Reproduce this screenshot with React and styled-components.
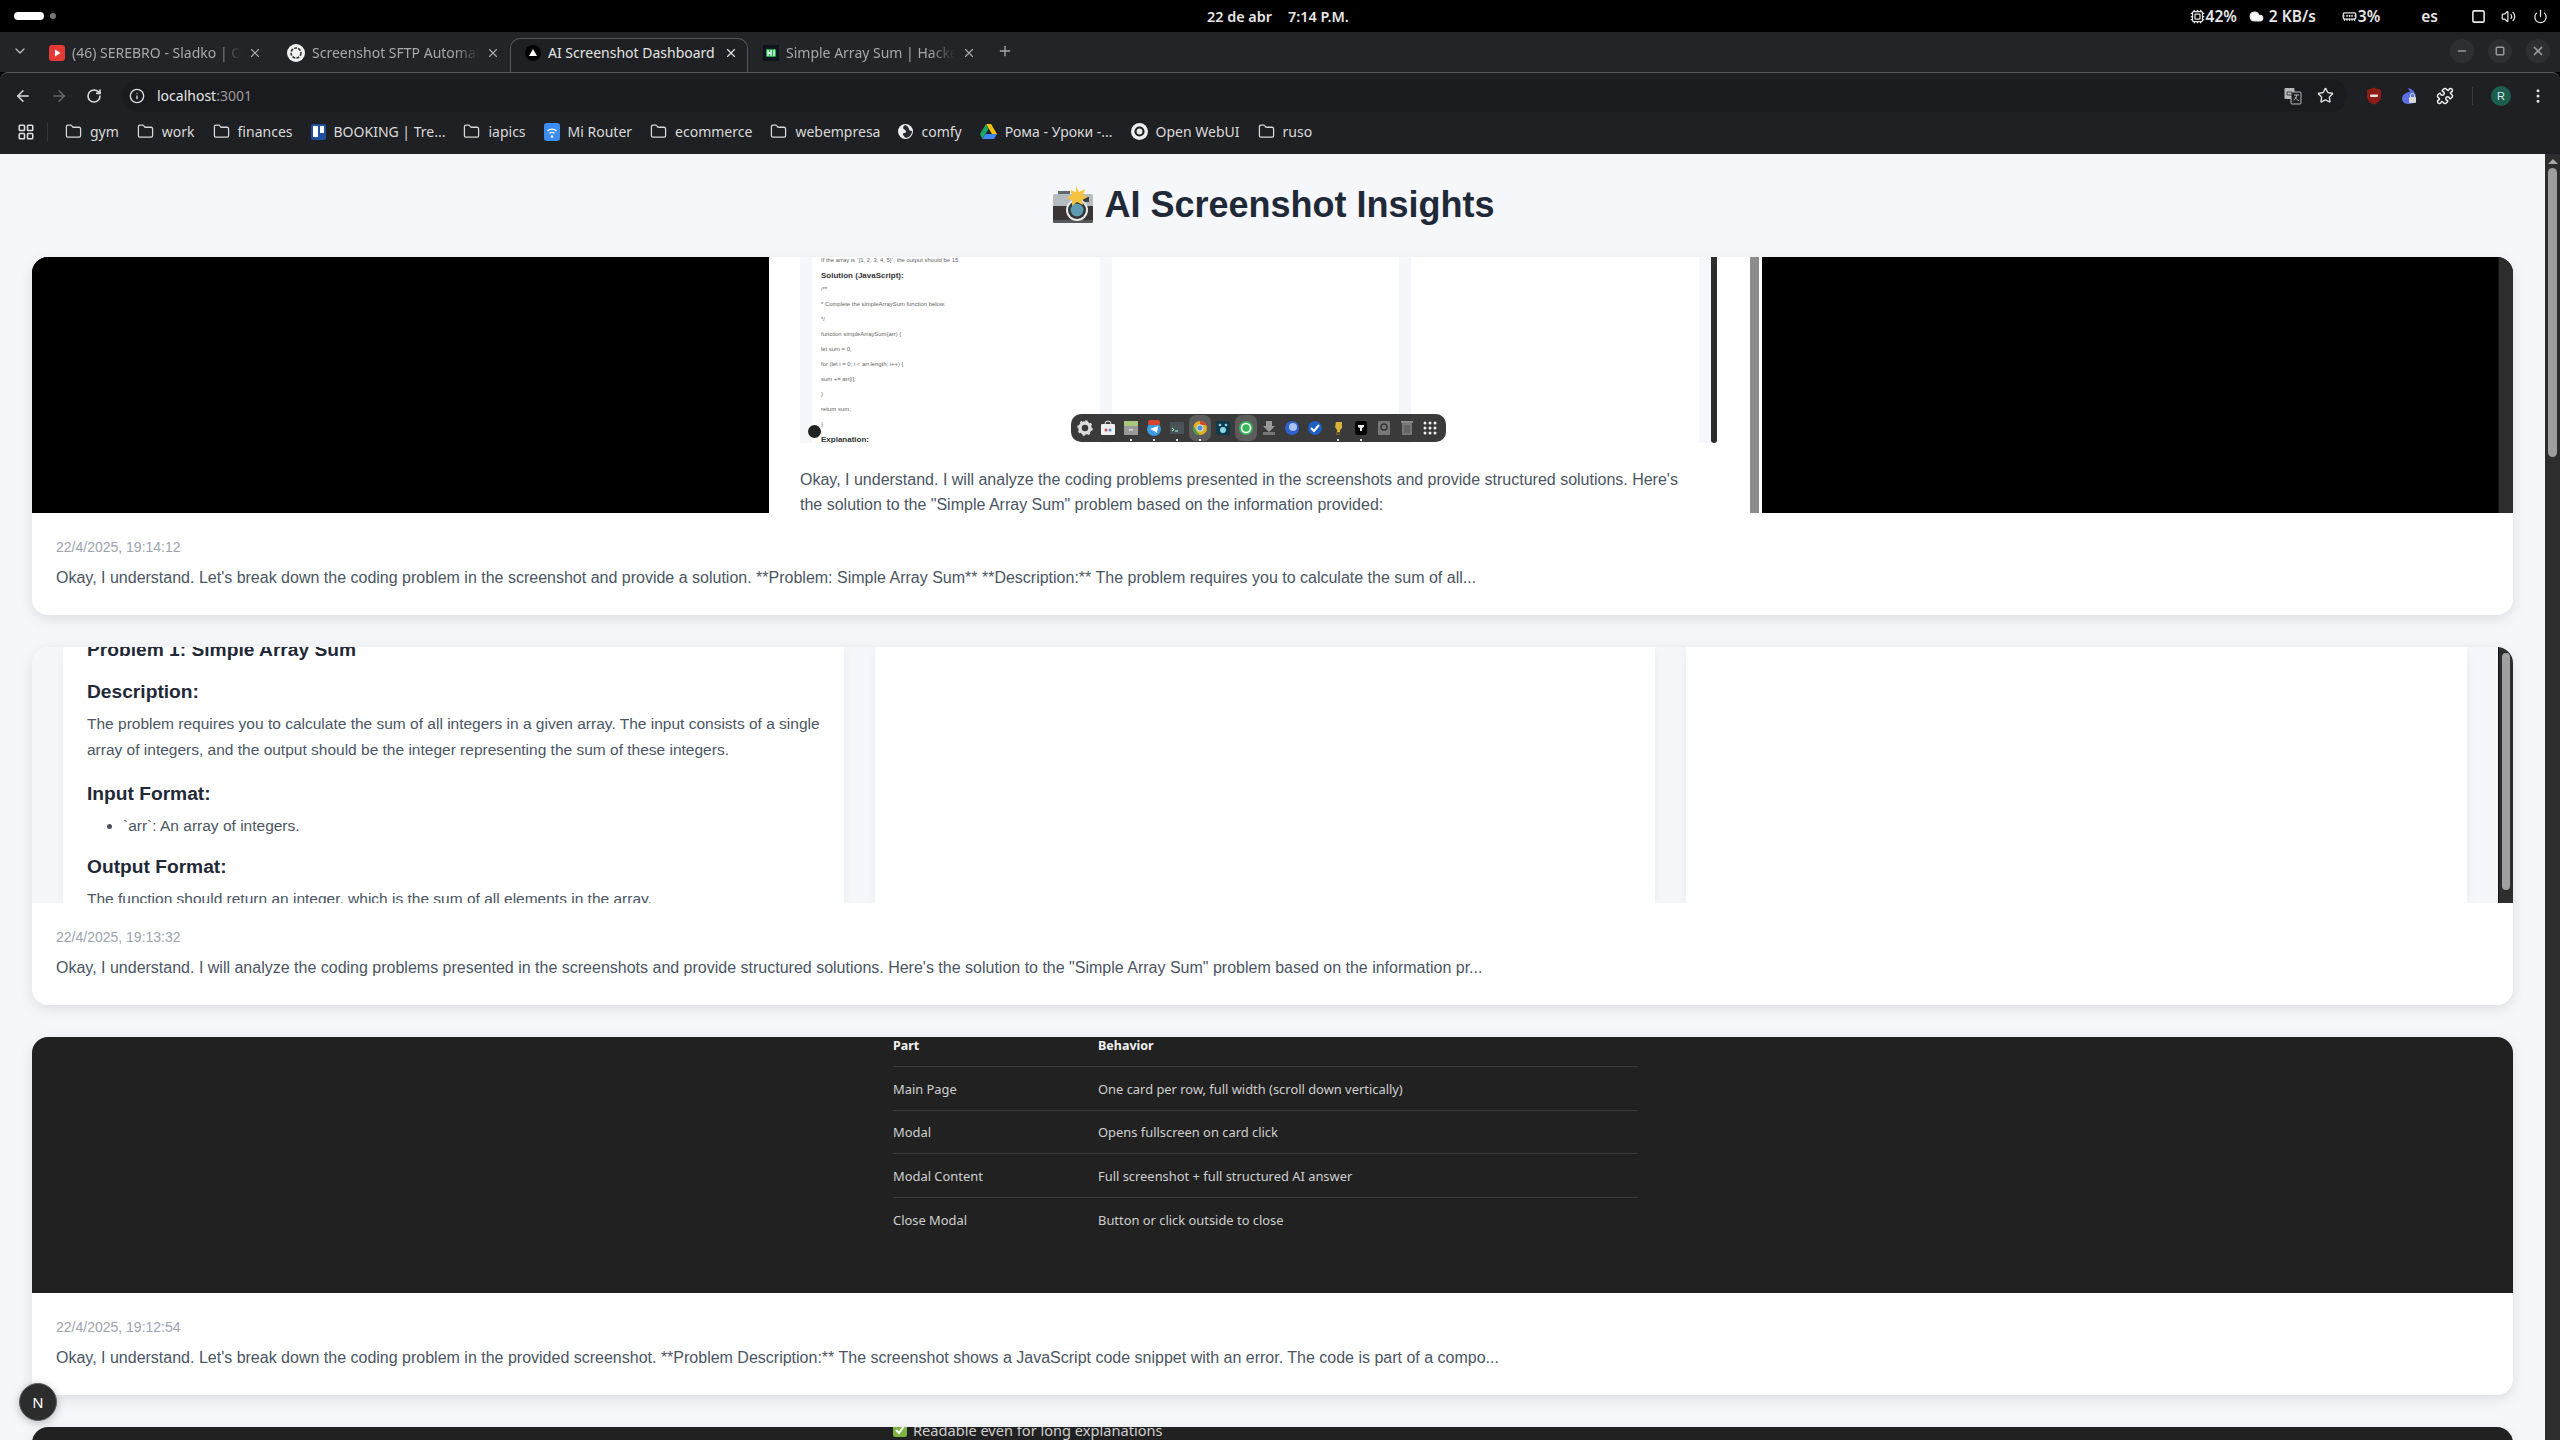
import React from 'react';
import styled, { createGlobalStyle } from 'styled-components';
import {
  ArrowLeft, ArrowRight, ChevronDown, Cloud, Cpu, EllipsisVertical, Folder, Info, LayoutGrid,
  MemoryStick, Minus, Plus, Power, Puzzle, RotateCw, Square, Star, Volume2, X,
} from 'lucide-react';

const GlobalStyle = createGlobalStyle`
  html, body {
    margin: 0;
    height: 100%;
    overflow: hidden;
    background: #000;
    font-family: "Liberation Sans", Arial, sans-serif;
  }
`;

const Root = styled.div`
  position: relative;
  display: flex;
  flex-direction: column;
  width: 2560px;
  height: 1440px;
  overflow: hidden;
`;

/* desktop top bar */
const SystemBar = styled.div`
  position: relative;
  flex: 0 0 32px;
  display: flex;
  align-items: center;
  justify-content: space-between;
  padding: 0 12px 0 14px;
  background: #000;
  color: #e6e6e6;
  font-family: "Noto Sans", sans-serif;
  font-size: 15.5px;
  font-weight: 600;
`;

const Workspaces = styled.div`
  display: flex;
  align-items: center;
  gap: 6px;
`;

const WorkspacePill = styled.span`
  width: 30px;
  height: 8px;
  border-radius: 4px;
  background: #fff;
`;

const WorkspaceDot = styled.span`
  width: 6px;
  height: 6px;
  border-radius: 50%;
  background: #777;
`;

const Clock = styled.div`
  position: absolute;
  left: 1207px;
  display: flex;
  gap: 16px;
  font-size: 14.4px;
  white-space: nowrap;
`;

const Tray = styled.div`
  display: flex;
  align-items: center;
`;

const TrayItem = styled.span`
  display: flex;
  align-items: center;
  gap: 1px;
  margin-left: ${(p) => p.$gap || 0}px;
`;

/* chrome tabs */
const TabStrip = styled.div`
  flex: 0 0 39px;
  display: flex;
  align-items: flex-start;
  padding: 6px 10px 0 0;
  background: #232428;
  box-sizing: border-box;
`;

const TabChevron = styled.div`
  flex: 0 0 34px;
  display: flex;
  justify-content: center;
  padding: 5px 0 0 6px;
  box-sizing: border-box;
  color: #bbb;
`;

const Tab = styled.div`
  position: relative;
  z-index: 1;
  flex: 0 0 238px;
  min-width: 0;
  height: 34px;
  display: flex;
  align-items: center;
  gap: 7px;
  padding: 0 9px 6px 14px;
  box-sizing: border-box;
  overflow: hidden;
  border: 1px solid ${(p) => (p.$active ? '#56575b' : 'transparent')};
  border-bottom: none;
  border-radius: 10px 10px 0 0;
  background: ${(p) => (p.$active ? '#1f2023' : 'transparent')};
  color: ${(p) => (p.$active ? '#e4e4e4' : '#a8a8a8')};
  font-family: "Noto Sans", sans-serif;
  font-size: 14px;
  & > svg {
    flex: 0 0 auto;
  }
`;

const TabTitle = styled.span`
  flex: 1;
  min-width: 0;
  overflow: hidden;
  white-space: nowrap;
  -webkit-mask-image: ${(p) => (p.$fade ? 'linear-gradient(90deg, #000 85%, transparent)' : 'none')};
`;

const NewTab = styled.div`
  display: flex;
  padding: 5px 0 0 11px;
  color: #a8a8a8;
`;

const WindowButtons = styled.div`
  margin-left: auto;
  display: flex;
  gap: 14px;
  padding-top: 1px;
  padding-right: 0;
`;

const WindowButton = styled.div`
  width: 24px;
  height: 24px;
  border-radius: 50%;
  display: flex;
  align-items: center;
  justify-content: center;
  background: #2e2f33;
  color: #9a9a9a;
`;

/* chrome address bar */
const Toolbar = styled.div`
  flex: 0 0 41px;
  display: flex;
  align-items: center;
  padding: 0 13px 0 14px;
  box-sizing: border-box;
  background: #1f2023;
  border-top: 1px solid #56575b;
  border-radius: 8px 8px 0 0;
  color: #d8d8d8;
`;

const NavButton = styled.div`
  flex: 0 0 36px;
  display: flex;
  padding-top: 5px;
  color: ${(p) => (p.$off ? '#666' : '#dcdcdc')};
`;

const Omnibox = styled.div`
  flex: 1;
  height: 33px;
  margin: 5px 0 0 0;
  display: flex;
  align-items: center;
  gap: 12px;
  padding: 0 13px 0 7px;
  box-sizing: border-box;
  border-radius: 17px;
  background: #1a1b1e;
  font-family: "Noto Sans", sans-serif;
  font-size: 14px;
`;

const Url = styled.span`
  color: #e6e6e6;
`;

const UrlPort = styled.span`
  color: #9a9a9a;
`;

const OmniIcons = styled.div`
  margin-left: auto;
  display: flex;
  align-items: center;
  gap: 15px;
`;

const ExtensionIcons = styled.div`
  flex: 0 0 auto;
  display: flex;
  align-items: center;
  padding-top: 5px;
  margin-left: 19px;
  gap: 18px;
`;

const ToolbarSep = styled.span`
  width: 1px;
  height: 18px;
  background: #3a3b3e;
`;

const Avatar = styled.div`
  width: 20px;
  height: 20px;
  border-radius: 50%;
  background: #1e5e50;
  color: #d7efe7;
  font-size: 11px;
  display: flex;
  align-items: center;
  justify-content: center;
`;

/* bookmarks */
const BookmarkBar = styled.div`
  flex: 0 0 41px;
  display: flex;
  align-items: center;
  padding: 0 0 4px 17px;
  box-sizing: border-box;
  background: #1f2023;
  color: #dadada;
  font-family: "Noto Sans", sans-serif;
  font-size: 14px;
`;

const BookmarkSep = styled.span`
  width: 1px;
  height: 20px;
  margin: 0 17px 0 12px;
  background: #333438;
`;

const Bookmarks = styled.div`
  display: flex;
  align-items: center;
  gap: 18px;
`;

const Bookmark = styled.div`
  display: flex;
  align-items: center;
  gap: 8px;
  white-space: nowrap;
`;

/* page */
const Viewport = styled.div`
  flex: 1;
  min-height: 0;
  display: flex;
`;

const Page = styled.main`
  flex: 1;
  min-width: 0;
  padding: 0 32px;
  background: #f5f7fb;
  overflow: hidden;
`;

const Title = styled.h1`
  margin: 0;
  height: 103px;
  display: flex;
  align-items: center;
  justify-content: center;
  gap: 10px;
  padding: 0 0 1px 3px;
  box-sizing: border-box;
  color: #1f2937;
  font-size: 36px;
  font-weight: 700;
`;

const Cards = styled.div`
  display: flex;
  flex-direction: column;
  gap: 32px;
`;

const Card = styled.article`
  flex: 0 0 auto;
  border-radius: 16px;
  overflow: hidden;
  background: #fff;
  box-shadow: 0 4px 14px rgba(0, 0, 0, 0.1);
`;

const ImageArea = styled.div`
  position: relative;
  display: flex;
  height: 256px;
  overflow: hidden;
  background: ${(p) => p.$bg};
`;

const CardBody = styled.div`
  padding: 24px 24px 24.4px;
`;

const Timestamp = styled.div`
  margin-bottom: 8px;
  color: #9ca3af;
  font-size: 14px;
  line-height: 20px;
`;

const Summary = styled.div`
  color: #4b5563;
  font-size: 16px;
  line-height: 25.6px;
  white-space: nowrap;
`;

/* first card: a shot of the app inside a black frame */
const BlackFill = styled.div`
  flex: ${(p) => (p.$width ? `0 0 ${p.$width}px` : '1')};
  background: #000;
`;

const MiniShot = styled.div`
  flex: 0 0 981px;
  display: flex;
  flex-direction: column;
  background: #fff;
  overflow: hidden;
`;

const MiniTop = styled.div`
  flex: 0 0 186px;
  display: flex;
  padding: 0 33px 0 31px;
  overflow: hidden;
`;

const MiniBand = styled.div`
  flex: 1;
  display: flex;
  gap: 12px;
  padding: 0 12px;
  background: #f5f7fb;
`;

const MiniPanel = styled.div`
  flex: 1;
  padding-left: 9px;
  background: #fff;
  color: #666;
  font-size: 5.9px;
  line-height: 15px;
  overflow: hidden;
`;

const MiniLine = styled.div`
  height: 15px;
  white-space: nowrap;
  &:first-child {
    margin-top: -4.5px;
  }
`;

const MiniHeading = styled.div`
  height: 13px;
  margin-top: 1px;
  color: #333;
  font-size: 8px;
  font-weight: 700;
  line-height: 13px;
  white-space: nowrap;
`;

const MiniScroll = styled.div`
  flex: 0 0 6px;
  background: #2d2d2d;
  border-radius: 0 0 4px 4px;
`;

const MiniAnswer = styled.p`
  margin: 23.5px 0 0 31px;
  width: 900px;
  color: #4b5563;
  font-size: 16px;
  line-height: 25px;
`;

const GreyStrip = styled.div`
  flex: 0 0 9px;
  margin-right: 3px;
  background: #8c8c8c;
  box-shadow: 3px 0 0 #fff;
`;

const DarkStrip = styled.div`
  flex: 0 0 15px;
  padding: 6px 3px 13px;
  box-sizing: border-box;
  background: #2d2d2d;
  display: flex;
  border-left: 1px solid #111;
`;

const DarkThumb = styled.div`
  flex: 1;
  border-radius: 5px;
  background: #a0a0a0;
`;

const Dock = styled.div`
  position: absolute;
  left: 1039px;
  top: 157px;
  width: 375px;
  height: 28px;
  display: flex;
  align-items: center;
  gap: 7px;
  padding: 0 6px;
  box-sizing: border-box;
  border-radius: 10px;
  background: #3a3a3a;
`;

const DockSlot = styled.span`
  position: relative;
  flex: 0 0 16px;
  height: 20px;
  display: flex;
  align-items: center;
  justify-content: center;
  border-radius: 4px;
  background: ${(p) => (p.$on ? '#5c5c5c' : 'transparent')};
  box-shadow: ${(p) => (p.$on ? '0 0 0 3px #5c5c5c' : 'none')};
`;

const DockDot = styled.i`
  position: absolute;
  left: 7px;
  bottom: -3px;
  width: 2px;
  height: 2px;
  background: #ddd;
`;

const MiniBadge = styled.div`
  position: absolute;
  left: 776px;
  top: 168px;
  width: 13px;
  height: 13px;
  border-radius: 50%;
  background: #222;
`;

/* second card: the answer panels */
const AnswerBand = styled.div`
  flex: 1;
  display: flex;
  gap: 31px;
  padding: 0 31px;
  background: #f5f7fb;
`;

const AnswerPanel = styled.div`
  flex: 1;
  min-width: 0;
  padding: 0 20px 0 24px;
  background: #fff;
  box-shadow: 0 2px 10px rgba(0, 0, 0, 0.05);
  overflow: hidden;
`;

const AnswerHeading = styled.h3`
  margin: 0 0 6px;
  color: #1f2937;
  font-size: 19.2px;
  font-weight: 700;
  line-height: 27px;
  &:first-child {
    margin-top: -11px;
    margin-bottom: 15.5px;
  }
`;

const AnswerText = styled.p`
  margin: 0 0 17.5px;
  color: #4b5563;
  font-size: 15.5px;
  line-height: 25.6px;
`;

const AnswerList = styled.ul`
  margin: 0 0 14.5px;
  padding-left: 36px;
  color: #4b5563;
  font-size: 15.5px;
  line-height: 25.6px;
`;

/* third card: table shot */
const DarkContent = styled.div`
  padding-left: 861px;
  width: 745px;
  font-family: "Noto Sans", sans-serif;
  font-size: 12.9px;
  color: #cfcfcf;
`;

const TableHead = styled.div`
  display: grid;
  grid-template-columns: 205px 1fr;
  height: 30px;
  padding-bottom: 11px;
  box-sizing: border-box;
  align-items: center;
  border-bottom: 1px solid #3a3a3a;
  color: #f2f2f2;
  font-weight: 700;
  font-size: 12.5px;
`;

const TableRow = styled.div`
  display: grid;
  grid-template-columns: 205px 1fr;
  height: 43.6px;
  padding-top: 1px;
  box-sizing: border-box;
  align-items: center;
  border-bottom: ${(p) => (p.$last ? 'none' : '1px solid #3a3a3a')};
`;

const ClippedLine = styled.div`
  display: flex;
  align-items: center;
  gap: 6px;
  margin-top: -7px;
  height: 20px;
  font-size: 14.6px;
`;

const ScrollTrack = styled.div`
  flex: 0 0 15px;
  display: flex;
  flex-direction: column;
  align-items: center;
  background: #2d2d2d;
`;

const ScrollArrow = styled.span`
  width: 0;
  height: 0;
  margin: 5px 0 4px;
  border-left: 5px solid transparent;
  border-right: 5px solid transparent;
  border-bottom: 5px solid #a8a8a8;
`;

const ScrollThumb = styled.div`
  width: 9px;
  height: 289px;
  border-radius: 5px;
  background: #9e9e9e;
`;

const DevBadge = styled.div`
  position: absolute;
  left: 19px;
  top: 1383px;
  width: 38px;
  height: 38px;
  box-sizing: border-box;
  border-radius: 50%;
  border: 1px solid #5e5e5e;
  background: #2c2c2c;
  color: #fff;
  font-size: 15px;
  display: flex;
  align-items: center;
  justify-content: center;
  box-shadow: 0 2px 8px rgba(0, 0, 0, 0.25);
`;

const YoutubeIcon = () => (
  <svg width="16" height="16" viewBox="0 0 16 16">
    <rect x="0" y="0" width="16" height="16" rx="3" fill="#e53935" />
    <path d="M6 4.500 11.500 8 6 11.500z" fill="#fff" />
  </svg>
);

const OpenAiIcon = () => (
  <svg width="18" height="18" viewBox="0 0 18 18">
    <circle cx="9" cy="9" r="9" fill="#f1f1f1" />
    <circle cx="9" cy="9" r="5" fill="none" stroke="#333" strokeWidth="1.600" strokeDasharray="3 1.200" />
  </svg>
);

const AppIcon = () => (
  <svg width="16" height="16" viewBox="0 0 16 16">
    <circle cx="8" cy="8" r="8" fill="#000" />
    <path d="M8 4 12 11H4z" fill="#fff" />
  </svg>
);

const HackerRankIcon = () => (
  <svg width="16" height="16" viewBox="0 0 16 16">
    <rect width="16" height="16" fill="#0e141e" />
    <rect x="3" y="4" width="10" height="8" rx="1" fill="#1ba94c" />
    <path d="M5 5v6M8 5v6M5 8h3M11 5v6" stroke="#fff" strokeWidth="1.300" />
  </svg>
);

const TranslateIcon = () => (
  <svg width="18" height="18" viewBox="0 0 18 18">
    <rect x="0.500" y="1" width="10" height="11" rx="1" fill="#b8b8b8" />
    <rect x="7" y="5" width="10" height="12" rx="1" fill="#1f2023" stroke="#b8b8b8" />
    <path d="M3 5h5v3H3z" fill="none" stroke="#444" />
    <path d="M10 8h5M12.500 8c0 3-1 4-3 5M11 10c1 2 2 3 4 3.500" fill="none" stroke="#b8b8b8" strokeWidth="1" />
  </svg>
);

const ShieldIcon = () => (
  <svg width="16" height="18" viewBox="0 0 16 18">
    <path d="M8 .5 15 3v6c0 4.500-3 7-7 8.500C4 16 1 13.500 1 9V3z" fill="#8c1d18" />
    <rect x="4" y="7.500" width="8" height="2.500" rx="1" fill="#f3dcdc" />
  </svg>
);

const BlueExtIcon = () => (
  <svg width="18" height="18" viewBox="0 0 18 18">
    <path d="M2 12C2 7 7 5 10 5L8 1c5 1 8 5 8 10 0 3-2 6-7 6-4 0-7-2-7-5z" fill="#5a6fe0" />
    <rect x="9" y="10" width="7" height="6" rx="1" fill="#d8d8d8" />
    <path d="M10.500 10V8.500a2 2 0 0 1 4 0V10" fill="none" stroke="#d8d8d8" />
  </svg>
);

const FolderIcon = () => <Folder size={17} strokeWidth={1.800} color="#d8d8d8" />;

const BookmarkGlyph = ({ kind }) => {
  if (kind === 'trello') {
    return (
      <svg width="15" height="16" viewBox="0 0 15 16">
        <rect width="15" height="16" rx="2" fill="#1d4f9e" />
        <rect x="2" y="2" width="5" height="11" fill="#fff" />
        <rect x="9" y="2" width="4" height="7" fill="#fff" />
      </svg>
    );
  }
  if (kind === 'router') {
    return (
      <svg width="16" height="18" viewBox="0 0 16 18">
        <rect width="16" height="18" rx="3" fill="#3b8ef0" />
        <path d="M3.500 8a6.500 6.500 0 0 1 9 0M5.500 10.500a3.500 3.500 0 0 1 5 0" fill="none" stroke="#fff" strokeWidth="1.200" />
        <circle cx="8" cy="13.500" r="1.200" fill="#fff" />
      </svg>
    );
  }
  if (kind === 'comfy') {
    return (
      <svg width="15" height="15" viewBox="0 0 15 15">
        <circle cx="7.500" cy="7.500" r="7.500" fill="#eee" />
        <path d="M7 1C4 3 5 5 7 6s1 3-1 3-1 3 2 5c4-1 6-4 6-7-2 0-3-1-3-2S9 1 7 1z" fill="#2a2b2e" />
      </svg>
    );
  }
  if (kind === 'drive') {
    return (
      <svg width="17" height="16" viewBox="0 0 17 16">
        <path d="M6 0h5l6 10h-5z" fill="#f4c20d" />
        <path d="M6 0 0 10l2.500 5 6-10z" fill="#1fa463" />
        <path d="M2.500 15h11.500l3-5H5.500z" fill="#4285f4" />
      </svg>
    );
  }
  return (
    <svg width="17" height="17" viewBox="0 0 17 17">
      <circle cx="8.500" cy="8.500" r="8.500" fill="#eee" />
      <circle cx="8.500" cy="8.500" r="4" fill="none" stroke="#222" strokeWidth="2.200" />
    </svg>
  );
};

const bookmarks = [
  { label: 'gym' }, { label: 'work' }, { label: 'finances' },
  { label: 'BOOKING | Tre...', icon: 'trello' }, { label: 'iapics' },
  { label: 'Mi Router', icon: 'router' }, { label: 'ecommerce' }, { label: 'webempresa' },
  { label: 'comfy', icon: 'comfy' }, { label: 'Рома - Уроки -...', icon: 'drive' },
  { label: 'Open WebUI', icon: 'webui' }, { label: 'ruso' },
];

const dockIcons = [
  { key: 'gear', art: <g><circle cx="8" cy="8" r="5" fill="none" stroke="#ddd" strokeWidth="3.500" /><circle cx="8" cy="8" r="7" fill="none" stroke="#ddd" strokeWidth="1.500" strokeDasharray="2.500 3" /></g> },
  { key: 'store', art: <g><rect x="1" y="4" width="14" height="11" rx="1" fill="#eee" /><path d="M5 4a3 3 0 0 1 6 0" fill="none" stroke="#eee" /><circle cx="6" cy="10" r="1.500" fill="#d9534f" /><circle cx="10" cy="10" r="1.500" fill="#4a90d9" /></g> },
  { key: 'files', dot: true, art: <g><rect x="1" y="1" width="14" height="5" fill="#a8c67a" /><rect x="1" y="6" width="14" height="9" fill="#999" /><rect x="6" y="9" width="4" height="1.500" fill="#ddd" /></g> },
  { key: 'telegram', dot: true, art: <g><circle cx="8" cy="9" r="7" fill="#3d9be0" /><path d="M4 9l8-3-1 7-3-2z" fill="#fff" /><rect x="2" y="0" width="12" height="5" rx="2" fill="#d9442f" /></g> },
  { key: 'terminal', dot: true, art: <g><rect x="1" y="2" width="14" height="12" fill="#4a5257" /><path d="M3 8l2 1.500L3 11M6 11h3" stroke="#9fd" fill="none" /></g> },
  { key: 'chrome', on: true, dot: true, art: <g><circle cx="8" cy="8" r="7" fill="#e2b21d" /><path d="M8 1a7 7 0 0 1 6.300 4H8z" fill="#d9442f" /><path d="M1.500 5.500 5 12l3 3a7 7 0 0 1-6.500-9.500z" fill="#3aa655" /><circle cx="8" cy="8" r="3.200" fill="#4a90d9" stroke="#eee" /></g> },
  { key: 'paw', art: <g><rect x="1" y="1" width="14" height="14" rx="2" fill="#0f3a4a" /><circle cx="8" cy="10" r="3" fill="#8fd3e8" /><circle cx="5" cy="5" r="1.300" fill="#8fd3e8" /><circle cx="11" cy="5" r="1.300" fill="#8fd3e8" /></g> },
  { key: 'whatsapp', on: true, art: <g><circle cx="8" cy="8" r="7" fill="#38b75a" /><circle cx="8" cy="8" r="4.500" fill="none" stroke="#fff" strokeWidth="1.500" /></g> },
  { key: 'download', art: <g><path d="M5 1h6v5h3l-6 6-6-6h3z" fill="#999" /><rect x="2" y="12" width="12" height="3" fill="#777" /></g> },
  { key: 'bubble', art: <g><circle cx="8" cy="8" r="7" fill="#2f5fd0" /><circle cx="9" cy="7" r="4" fill="#a9c4f5" /></g> },
  { key: 'steam', art: <g><circle cx="8" cy="8" r="7" fill="#1e5fc4" /><path d="M4 8l3 3 5-6" stroke="#fff" strokeWidth="2" fill="none" /></g> },
  { key: 'bottle', dot: true, art: <g><path d="M6 2h6v6l-2 2v4H7v-4L5 7z" fill="#d9b23a" /><rect x="6" y="12" width="4" height="3" fill="#6a5a30" /></g> },
  { key: 'box', dot: true, art: <g><rect x="2" y="1" width="12" height="14" rx="3" fill="#000" /><path d="M5 5h6v2l-2 1v3H7V8L5 7z" fill="#eee" /></g> },
  { key: 'disk', art: <g><rect x="2" y="1" width="12" height="14" rx="1" fill="#777" /><circle cx="8" cy="7" r="3" fill="none" stroke="#333" strokeWidth="1.500" /></g> },
  { key: 'trash', art: <g><rect x="3" y="3" width="10" height="12" rx="1" fill="#777" /><rect x="2" y="1" width="12" height="2" fill="#888" /><path d="M6 5v8M8 5v8M10 5v8" stroke="#555" /></g> },
  { key: 'apps', art: <g fill="#eee">{[3, 8, 13].flatMap((y) => [3, 8, 13].map((x) => <circle key={`${x}${y}`} cx={x} cy={y} r="1.500" />))}</g> },
];

const CameraEmoji = () => (
  <svg width="41" height="38" viewBox="0 0 41 38">
    <rect x="5" y="5" width="12" height="6" fill="#5e6a70" />
    <rect x="0" y="8" width="40" height="13" rx="2" fill="#b4bcc2" />
    <rect x="0" y="20" width="40" height="16" fill="#3a3635" />
    <rect x="0" y="34" width="40" height="3" rx="1" fill="#55595b" />
    <rect x="30" y="11" width="6" height="5" fill="#3a3f44" />
    <circle cx="24" cy="24" r="11" fill="#e8e8e8" />
    <circle cx="24" cy="24" r="9" fill="#333" />
    <circle cx="24" cy="24" r="6.500" fill="#5d9ab4" />
    <path d="M23 0l3 6 6-3-2 6 5 2-6 3 1 5-6-3-5 4 0-6-6-2 6-3-2-5 6 2z" fill="#f6c342" />
  </svg>
);

const CheckEmoji = () => (
  <svg width="14" height="14" viewBox="0 0 14 14">
    <rect width="14" height="14" rx="2" fill="#7cb342" />
    <path d="M3 7l3 3 5-7" fill="none" stroke="#fff" strokeWidth="2" />
  </svg>
);

const rows = [
  ['Main Page', 'One card per row, full width (scroll down vertically)'],
  ['Modal', 'Opens fullscreen on card click'],
  ['Modal Content', 'Full screenshot + full structured AI answer'],
  ['Close Modal', 'Button or click outside to close'],
];

export default function App() {
  return (
    <Root>
      <GlobalStyle />
      <SystemBar>
        <Workspaces><WorkspacePill /><WorkspaceDot /></Workspaces>
        <Clock><span>22 de abr</span><span>7:14 P.M.</span></Clock>
        <Tray>
          <TrayItem><Cpu size={15} />42%</TrayItem>
          <TrayItem $gap={12}><Cloud size={15} fill="#fff" />&nbsp;2 KB/s</TrayItem>
          <TrayItem $gap={26}><MemoryStick size={15} />3%</TrayItem>
          <TrayItem $gap={41}>es</TrayItem>
          <TrayItem $gap={33}><Square size={15} strokeWidth={2.500} /></TrayItem>
          <TrayItem $gap={15}><Volume2 size={15} /></TrayItem>
          <TrayItem $gap={17}><Power size={15} /></TrayItem>
        </Tray>
      </SystemBar>

      <TabStrip>
        <TabChevron><ChevronDown size={16} /></TabChevron>
        <Tab>
          <YoutubeIcon />
          <TabTitle $fade>(46) SEREBRO - Sladko | Official</TabTitle>
          <X size={14} />
        </Tab>
        <Tab>
          <OpenAiIcon />
          <TabTitle $fade>Screenshot SFTP Automation</TabTitle>
          <X size={14} />
        </Tab>
        <Tab $active>
          <AppIcon />
          <TabTitle>AI Screenshot Dashboard</TabTitle>
          <X size={14} />
        </Tab>
        <Tab>
          <HackerRankIcon />
          <TabTitle $fade>Simple Array Sum | HackerRank</TabTitle>
          <X size={14} />
        </Tab>
        <NewTab><Plus size={16} /></NewTab>
        <WindowButtons>
          <WindowButton><Minus size={12} strokeWidth={3} /></WindowButton>
          <WindowButton><Square size={10} strokeWidth={3.500} /></WindowButton>
          <WindowButton><X size={14} strokeWidth={3} /></WindowButton>
        </WindowButtons>
      </TabStrip>

      <Toolbar>
        <NavButton><ArrowLeft size={18} /></NavButton>
        <NavButton $off><ArrowRight size={18} /></NavButton>
        <NavButton><RotateCw size={16} strokeWidth={2.400} /></NavButton>
        <Omnibox>
          <Info size={16} color="#dcdcdc" />
          <span><Url>localhost</Url><UrlPort>:3001</UrlPort></span>
          <OmniIcons>
            <TranslateIcon />
            <Star size={17} color="#dcdcdc" />
          </OmniIcons>
        </Omnibox>
        <ExtensionIcons>
          <ShieldIcon />
          <BlueExtIcon />
          <Puzzle size={18} color="#f0f0f0" />
          <ToolbarSep />
          <Avatar>R</Avatar>
          <EllipsisVertical size={18} color="#e0e0e0" />
        </ExtensionIcons>
      </Toolbar>

      <BookmarkBar>
        <LayoutGrid size={18} color="#e0e0e0" />
        <BookmarkSep />
        <Bookmarks>
          {bookmarks.map((b) => (
            <Bookmark key={b.label}>
              {b.icon ? <BookmarkGlyph kind={b.icon} /> : <FolderIcon />}
              {b.label}
            </Bookmark>
          ))}
        </Bookmarks>
      </BookmarkBar>

      <Viewport>
        <Page>
          <Title><CameraEmoji />AI Screenshot Insights</Title>
          <Cards>
            <Card>
              <ImageArea $bg="#000">
                <BlackFill $width={737} />
                <MiniShot>
                  <MiniTop>
                    <MiniBand>
                      <MiniPanel>
                        <MiniLine>If the array is `[1, 2, 3, 4, 5]`, the output should be 15.</MiniLine>
                        <MiniHeading>Solution (JavaScript):</MiniHeading>
                        <MiniLine>/**</MiniLine>
                        <MiniLine>* Complete the simpleArraySum function below.</MiniLine>
                        <MiniLine>*/</MiniLine>
                        <MiniLine>function simpleArraySum(arr) {'{'}</MiniLine>
                        <MiniLine>let sum = 0;</MiniLine>
                        <MiniLine>for (let i = 0; i &lt; arr.length; i++) {'{'}</MiniLine>
                        <MiniLine>sum += arr[i];</MiniLine>
                        <MiniLine>{'}'}</MiniLine>
                        <MiniLine>return sum;</MiniLine>
                        <MiniLine>{'}'}</MiniLine>
                        <MiniHeading>Explanation:</MiniHeading>
                      </MiniPanel>
                      <MiniPanel />
                      <MiniPanel />
                    </MiniBand>
                    <MiniScroll />
                  </MiniTop>
                  <MiniAnswer>
                    Okay, I understand. I will analyze the coding problems presented in the screenshots and provide structured solutions. Here's the solution to the "Simple Array Sum" problem based on the information provided:
                  </MiniAnswer>
                </MiniShot>
                <GreyStrip />
                <BlackFill />
                <DarkStrip />
                <MiniBadge />
                <Dock>
                  {dockIcons.map((icon) => (
                    <DockSlot key={icon.key} $on={icon.on}>
                      <svg width="16" height="16" viewBox="0 0 16 16">{icon.art}</svg>
                      {icon.dot && <DockDot />}
                    </DockSlot>
                  ))}
                </Dock>
              </ImageArea>
              <CardBody>
                <Timestamp>22/4/2025, 19:14:12</Timestamp>
                <Summary>Okay, I understand. Let's break down the coding problem in the screenshot and provide a solution. **Problem: Simple Array Sum** **Description:** The problem requires you to calculate the sum of all...</Summary>
              </CardBody>
            </Card>

            <Card>
              <ImageArea $bg="#f5f7fb">
                <AnswerBand>
                  <AnswerPanel>
                    <AnswerHeading>Problem 1: Simple Array Sum</AnswerHeading>
                    <AnswerHeading>Description:</AnswerHeading>
                    <AnswerText>The problem requires you to calculate the sum of all integers in a given array. The input consists of a single array of integers, and the output should be the integer representing the sum of these integers.</AnswerText>
                    <AnswerHeading>Input Format:</AnswerHeading>
                    <AnswerList><li>`arr`: An array of integers.</li></AnswerList>
                    <AnswerHeading>Output Format:</AnswerHeading>
                    <AnswerText>The function should return an integer, which is the sum of all elements in the array.</AnswerText>
                  </AnswerPanel>
                  <AnswerPanel />
                  <AnswerPanel />
                </AnswerBand>
                <DarkStrip><DarkThumb /></DarkStrip>
              </ImageArea>
              <CardBody>
                <Timestamp>22/4/2025, 19:13:32</Timestamp>
                <Summary>Okay, I understand. I will analyze the coding problems presented in the screenshots and provide structured solutions. Here's the solution to the "Simple Array Sum" problem based on the information pr...</Summary>
              </CardBody>
            </Card>

            <Card>
              <ImageArea $bg="#212121">
                <DarkContent>
                  <TableHead><span>Part</span><span>Behavior</span></TableHead>
                  {rows.map(([part, behavior], i) => (
                    <TableRow key={part} $last={i === rows.length - 1}>
                      <span>{part}</span>
                      <span>{behavior}</span>
                    </TableRow>
                  ))}
                </DarkContent>
              </ImageArea>
              <CardBody>
                <Timestamp>22/4/2025, 19:12:54</Timestamp>
                <Summary>Okay, I understand. Let's break down the coding problem in the provided screenshot. **Problem Description:** The screenshot shows a JavaScript code snippet with an error. The code is part of a compo...</Summary>
              </CardBody>
            </Card>

            <Card>
              <ImageArea $bg="#212121">
                <DarkContent>
                  <ClippedLine><CheckEmoji />Readable even for long explanations</ClippedLine>
                </DarkContent>
              </ImageArea>
            </Card>
          </Cards>
        </Page>
        <ScrollTrack>
          <ScrollArrow />
          <ScrollThumb />
        </ScrollTrack>
      </Viewport>
      <DevBadge>N</DevBadge>
    </Root>
  );
}
